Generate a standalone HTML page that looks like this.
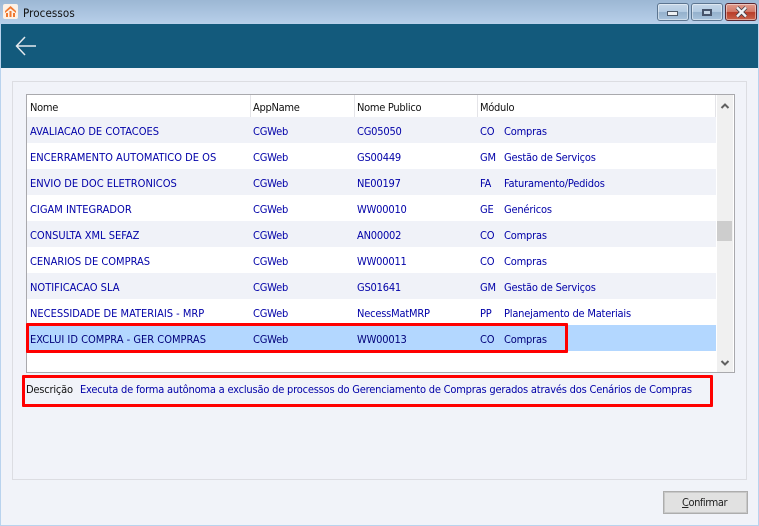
<!DOCTYPE html>
<html><head><meta charset="utf-8"><style>
html,body{margin:0;padding:0}
body{width:759px;height:526px;position:relative;overflow:hidden;background:#b9d3ee;font-family:"DejaVu Sans Condensed","DejaVu Sans",sans-serif;font-stretch:condensed;font-size:11px;letter-spacing:-.2px;color:#0000a8}
div{position:absolute;box-sizing:border-box}
.t{white-space:nowrap;line-height:14px;height:14px}
.c{letter-spacing:0}
.row{left:27px;width:689px;height:26px}
.g{background:#f0f2f8}
.wb{top:3px;height:18px;border:1px solid #5c7590;border-radius:3px;background:linear-gradient(#c4d6e8 0,#b4cbe2 48%,#94b0cc 52%,#a9c3dc 100%);box-shadow:inset 0 0 0 1px rgba(255,255,255,.45)}
.h{color:#111;top:100px;letter-spacing:-.28px}
</style></head><body>
<div style="left:0;top:0;width:759px;height:24px;background:linear-gradient(#9cb7d4,#b8d0ea)"></div>
<div style="left:3px;top:4px;width:15px;height:15px;background:#fdf1e6;border-radius:2px"></div>
<svg style="position:absolute;left:5px;top:6px" width="11" height="11" viewBox="0 0 11 11"><path d="M0 5L5.500 0L11 5V7L5.500 2.500L0 7ZM1 7H3V11H1ZM4.500 5H6.500V11H4.500ZM8 7H10V11H8Z" fill="#f07830"/></svg>
<div class="t" style="left:23px;top:6px;color:#111;font-size:11.500px;letter-spacing:.1px">Processos</div>
<div class="wb" style="left:657px;width:32px"><div style="left:9px;top:7px;width:11px;height:5px;background:#eef1f4;border:1px solid #4c5868"></div></div>
<div class="wb" style="left:691px;width:32px"><div style="left:10px;top:5px;width:10px;height:7px;border:2px solid #46536a;background:#c4d4e4"></div></div>
<div class="wb" style="left:725px;width:32px;border-color:#5a2630;background:linear-gradient(#e09a8c 0,#d27a68 48%,#b83c28 52%,#c9624a 100%)"><svg style="position:absolute;left:9px;top:2px" width="13" height="12" viewBox="0 0 13 12"><path d="M2 1.500L11 10.500M11 1.500L2 10.500" stroke="#3e3e48" stroke-width="4"/><path d="M2 1.500L11 10.500M11 1.500L2 10.500" stroke="#f2f3f5" stroke-width="2.400"/></svg></div>

<div style="left:1px;top:24px;width:757px;height:501px;background:#f1f3f9"></div>
<div style="left:1px;top:24px;width:757px;height:44px;background:#135a7c"></div>
<svg style="position:absolute;left:15px;top:35px" width="22" height="22" viewBox="0 0 22 22"><path d="M10 2L1.500 11L10 20M1.500 11H21" fill="none" stroke="#e4e9ee" stroke-width="1.500"/></svg>

<div style="left:12px;top:81px;width:735px;height:399px;border:1px solid #dcdde2"></div>
<div style="left:26px;top:94px;width:709px;height:279px;border:1px solid #a9a9ad;background:#fff"></div>
<div style="left:717px;top:95px;width:16px;height:277px;background:#f0f0f0"></div>
<div style="left:717px;top:221px;width:15px;height:20px;background:#cdcdcd"></div>
<svg style="position:absolute;left:720px;top:102px" width="10" height="8" viewBox="0 0 10 8"><path d="M1.500 6L5 2.500L8.500 6" fill="none" stroke="#606060" stroke-width="2"/></svg>
<svg style="position:absolute;left:720px;top:359px" width="10" height="8" viewBox="0 0 10 8"><path d="M1.500 2L5 5.500L8.500 2" fill="none" stroke="#606060" stroke-width="2"/></svg>
<div style="left:250px;top:95px;width:1px;height:22px;background:#e4e4e8"></div>
<div style="left:354px;top:95px;width:1px;height:22px;background:#e4e4e8"></div>
<div style="left:477px;top:95px;width:1px;height:22px;background:#e4e4e8"></div>
<div style="left:715px;top:95px;width:1px;height:22px;background:#e4e4e8"></div>

<div class="row g" style="top:117px"></div>
<div class="row g" style="top:169px"></div>
<div class="row g" style="top:221px"></div>
<div class="row g" style="top:273px"></div>
<div class="row" style="top:325px;background:#b3d7ff"></div>

<div style="left:0;top:1px;width:759px;height:1px">
<div class="t h" style="left:30px">Nome</div>
<div class="t h" style="left:253px">AppName</div>
<div class="t h" style="left:357px">Nome Publico</div>
<div class="t h" style="left:480px">Módulo</div>
<div class="t c" style="left:30px;top:124px">AVALIACAO DE COTACOES</div><div class="t" style="left:253px;top:124px">CGWeb</div><div class="t" style="left:357px;top:124px">CG05050</div><div class="t" style="left:480px;top:124px">CO</div><div class="t" style="left:504px;top:124px">Compras</div>
<div class="t c" style="left:30px;top:150px">ENCERRAMENTO AUTOMATICO DE OS</div><div class="t" style="left:253px;top:150px">CGWeb</div><div class="t" style="left:357px;top:150px">GS00449</div><div class="t" style="left:480px;top:150px">GM</div><div class="t" style="left:504px;top:150px">Gestão de Serviços</div>
<div class="t c" style="left:30px;top:176px">ENVIO DE DOC ELETRONICOS</div><div class="t" style="left:253px;top:176px">CGWeb</div><div class="t" style="left:357px;top:176px">NE00197</div><div class="t" style="left:480px;top:176px">FA</div><div class="t" style="left:504px;top:176px">Faturamento/Pedidos</div>
<div class="t c" style="left:30px;top:202px">CIGAM INTEGRADOR</div><div class="t" style="left:253px;top:202px">CGWeb</div><div class="t" style="left:357px;top:202px">WW00010</div><div class="t" style="left:480px;top:202px">GE</div><div class="t" style="left:504px;top:202px">Genéricos</div>
<div class="t c" style="left:30px;top:228px">CONSULTA XML SEFAZ</div><div class="t" style="left:253px;top:228px">CGWeb</div><div class="t" style="left:357px;top:228px">AN00002</div><div class="t" style="left:480px;top:228px">CO</div><div class="t" style="left:504px;top:228px">Compras</div>
<div class="t c" style="left:30px;top:254px">CENARIOS DE COMPRAS</div><div class="t" style="left:253px;top:254px">CGWeb</div><div class="t" style="left:357px;top:254px">WW00011</div><div class="t" style="left:480px;top:254px">CO</div><div class="t" style="left:504px;top:254px">Compras</div>
<div class="t c" style="left:30px;top:280px">NOTIFICACAO SLA</div><div class="t" style="left:253px;top:280px">CGWeb</div><div class="t" style="left:357px;top:280px">GS01641</div><div class="t" style="left:480px;top:280px">GM</div><div class="t" style="left:504px;top:280px">Gestão de Serviços</div>
<div class="t c" style="left:30px;top:306px">NECESSIDADE DE MATERIAIS - MRP</div><div class="t" style="left:253px;top:306px">CGWeb</div><div class="t" style="left:357px;top:306px">NecessMatMRP</div><div class="t" style="left:480px;top:306px">PP</div><div class="t" style="left:504px;top:306px">Planejamento de Materiais</div>
<div class="t c" style="left:30px;top:332px;color:#00007a">EXCLUI ID COMPRA - GER COMPRAS</div><div class="t" style="left:253px;top:332px;color:#00007a">CGWeb</div><div class="t" style="left:357px;top:332px;color:#00007a">WW00013</div><div class="t" style="left:480px;top:332px;color:#00007a">CO</div><div class="t" style="left:504px;top:332px;color:#00007a">Compras</div>
</div>

<div style="left:26px;top:323px;width:542px;height:30px;border:3px solid #f00;border-radius:1px"></div>
<div class="t" style="left:26px;top:383px;color:#111">Descrição</div>
<div class="t" style="left:80px;top:383px">Executa de forma autônoma a exclusão de processos do Gerenciamento de Compras gerados através dos Cenários de Compras</div>
<div style="left:22px;top:375px;width:691px;height:32px;border:3px solid #f00;border-radius:1px"></div>

<div style="left:663px;top:491px;width:85px;height:23px;background:#e1e1e1;border:1px solid #adadad;box-shadow:inset 0 0 0 1px #c8c8c8"></div>
<div class="t" style="left:682px;top:496px;color:#222;letter-spacing:-.45px"><span style="text-decoration:underline">C</span>onfirmar</div>
</body></html>
